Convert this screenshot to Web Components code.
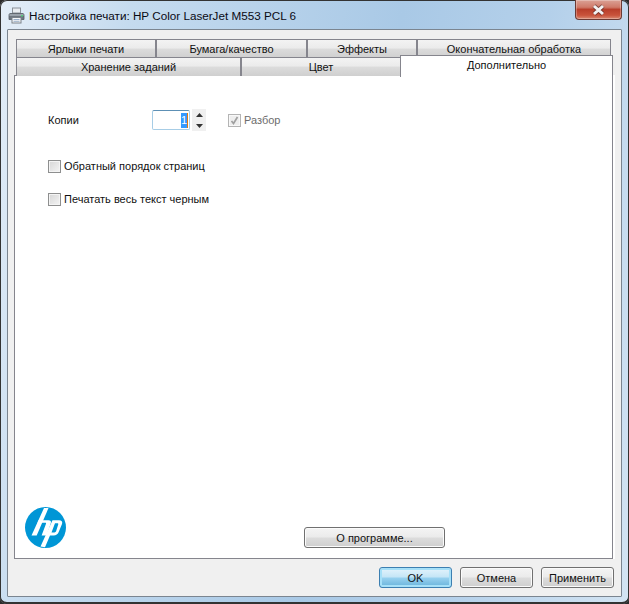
<!DOCTYPE html>
<html lang="ru">
<head>
<meta charset="utf-8">
<title>Настройка печати</title>
<style>
html, body { margin: 0; padding: 0; background: #2b2b2b; }
body { font: 11px "Liberation Sans", Arial, sans-serif; color: #111; }
</style>
</head>
<body>
<print-dialog>
  <title-bar slot="title">Настройка печати: HP Color LaserJet M553 PCL 6</title-bar>
  <tab-strip slot="tabs">
    <tab-row>
      <tab-item style="width:140px">Ярлыки печати</tab-item>
      <tab-item style="width:151px">Бумага/качество</tab-item>
      <tab-item style="width:110px">Эффекты</tab-item>
      <tab-item style="width:194px">Окончательная обработка</tab-item>
    </tab-row>
    <tab-row>
      <tab-item style="width:225px">Хранение заданий</tab-item>
      <tab-item style="width:160px">Цвет</tab-item>
      <tab-item active style="width:213px">Дополнительно</tab-item>
    </tab-row>
  </tab-strip>
  <advanced-page slot="page"></advanced-page>
  <win-button slot="actions" default style="width:73px">OK</win-button>
  <win-button slot="actions" style="width:73px">Отмена</win-button>
  <win-button slot="actions" style="width:73px">Применить</win-button>
</print-dialog>

<script>
const FONT = '"Liberation Sans", Arial, sans-serif';

class PrintDialog extends HTMLElement {
    constructor() {
        super();
        this.attachShadow({ mode: 'open' });
        this.shadowRoot.innerHTML = `
            <style>
                :host {
                    display: block;
                    box-sizing: border-box;
                    width: 629px;
                    height: 604px;
                    padding: 0 1px 2px 1px;
                    border-radius: 7px;
                    background: linear-gradient(100deg, #e4eef8 0%, #c5dbef 18%, #a9c9e6 55%, #b4d0ea 75%, #d3e4f3 100%);
                    box-shadow: inset 0 0 0 1px #333, inset 0 -2px 0 #333;
                    overflow: hidden;
                }
                .client {
                    box-sizing: border-box;
                    height: 568px;
                    margin: 0 6px 0 6px;
                    padding: 10px 8px 0 6px;
                    background: #f0f0f0;
                    border: 1px solid #7b8590;
                    border-radius: 1px;
                    display: flex;
                    flex-direction: column;
                }
                .actions {
                    display: flex;
                    justify-content: flex-end;
                    gap: 8px;
                    padding: 8px 0 0 0;
                    margin-right: -1px;
                }
            </style>
            <slot name="title"></slot>
            <div class="client">
                <slot name="tabs"></slot>
                <slot name="page"></slot>
                <div class="actions"><slot name="actions"></slot></div>
            </div>`;
    }
}
customElements.define('print-dialog', PrintDialog);

class TitleBar extends HTMLElement {
    constructor() {
        super();
        this.attachShadow({ mode: 'open' });
        this.shadowRoot.innerHTML = `
            <style>
                :host {
                    display: flex;
                    align-items: flex-start;
                    height: 29px;
                    font: 11.7px ${FONT};
                    color: #0a0a14;
                }
                .icon { margin: 7px 4px 0 7px; flex: none; }
                .text { margin-top: 8px; line-height: 15px; white-space: nowrap; flex: 1; }
                close-button { margin-right: 6px; }
            </style>
            <svg class="icon" width="17" height="17" viewBox="0 0 17 17">
                <rect x="4.5" y="1" width="8" height="5" fill="#e9edf1" stroke="#8b9299"/>
                <path d="M2 6.5h13a1.5 1.5 0 0 1 1 1.4v4.6H1V7.9a1.5 1.5 0 0 1 1-1.4z" fill="#6f7780" stroke="#565d65" stroke-width=".8"/>
                <rect x="1.5" y="7" width="14" height="2" fill="#9aa2aa"/>
                <rect x="13" y="8" width="2" height="1.4" fill="#4fd07a"/>
                <rect x="4" y="10.5" width="9" height="5.5" fill="#f4f6f8" stroke="#7a828a"/>
                <path d="M5.500 12.500h6M5.500 14.300h6" stroke="#8fa7c4" stroke-width=".9"/>
            </svg>
            <span class="text"><slot></slot></span>
            <close-button></close-button>`;
    }
}
customElements.define('title-bar', TitleBar);

class CloseButton extends HTMLElement {
    constructor() {
        super();
        this.attachShadow({ mode: 'open' });
        this.shadowRoot.innerHTML = `
            <style>
                :host {
                    display: flex;
                    align-items: center;
                    justify-content: center;
                    box-sizing: border-box;
                    width: 47px;
                    height: 20px;
                    border: 1px solid #6b3a34;
                    border-top: 0;
                    border-radius: 0 0 4px 4px;
                    background: linear-gradient(#dba195 0%, #cf7a69 38%, #b93f2b 50%, #c9533b 80%, #d98a72 100%);
                    box-shadow: inset 0 0 0 1px rgba(255,255,255,.28);
                }
            </style>
            <svg width="15" height="12" viewBox="0 0 15 12">
                <path d="M3 2 12 10M12 2 3 10" fill="none" stroke="#4d2a28" stroke-width="4.6" opacity=".6"/>
                <path d="M3 2 12 10M12 2 3 10" fill="none" stroke="#f2f2f2" stroke-width="3"/>
            </svg>`;
    }
}
customElements.define('close-button', CloseButton);

class TabStrip extends HTMLElement {
    constructor() {
        super();
        this.attachShadow({ mode: 'open' });
        this.shadowRoot.innerHTML = `
            <style>
                :host { display: block; padding-left: 2px; position: relative; z-index: 1; margin-bottom: -1px; }
            </style>
            <slot></slot>`;
    }
}
customElements.define('tab-strip', TabStrip);

class TabRow extends HTMLElement {
    constructor() {
        super();
        this.attachShadow({ mode: 'open' });
        this.shadowRoot.innerHTML = `
            <style>
                :host { display: flex; height: 18px; align-items: flex-end; }
            </style>
            <slot></slot>`;
    }
}
customElements.define('tab-row', TabRow);

class TabItem extends HTMLElement {
    constructor() {
        super();
        this.attachShadow({ mode: 'open' });
        this.shadowRoot.innerHTML = `
            <style>
                :host {
                    display: flex;
                    justify-content: center;
                    box-sizing: border-box;
                    height: 19px;
                    padding-top: 2px;
                    flex: none;
                    border: 1px solid #85858d;
                    border-bottom: 0;
                    background: linear-gradient(#f3f3f3 0%, #ebebeb 45%, #dcdcdc 50%, #cfcfcf 100%);
                    font: 11px/15px ${FONT};
                    color: #111;
                    white-space: nowrap;
                }
                :host([active]) {
                    position: relative;
                    height: 22px;
                    margin-left: -1px;
                    margin-bottom: -1px;
                    background: #fff;
                    padding-top: 2px;
                }
            </style>
            <slot></slot>`;
    }
}
customElements.define('tab-item', TabItem);

class AdvancedPage extends HTMLElement {
    constructor() {
        super();
        this.attachShadow({ mode: 'open' });
        this.shadowRoot.innerHTML = `
            <style>
                :host {
                    display: flex;
                    flex-direction: column;
                    box-sizing: border-box;
                    height: 484px;
                    padding: 33px 0 10px 33px;
                    background: #fff;
                    border: 1px solid #85858d;
                    box-shadow: 2px 0 0 #fff;
                    font: 11px/15px ${FONT};
                    color: #111;
                }
                .copies { display: flex; align-items: center; height: 22px; }
                .copies .label { width: 104px; }
                .copies check-box { margin-left: 22px; }
                .stack { display: flex; flex-direction: column; gap: 18px; margin-top: 28px; }
                .bottom { margin-top: auto; display: flex; align-items: flex-end; }
                .bottom win-button { width: 141px; margin: 0 0 0 238px; }
            </style>
            <div class="copies">
                <span class="label">Копии</span>
                <spin-box value="1"></spin-box>
                <check-box checked disabled>Разбор</check-box>
            </div>
            <div class="stack">
                <check-box>Обратный порядок страниц</check-box>
                <check-box>Печатать весь текст черным</check-box>
            </div>
            <div class="bottom">
                <hp-logo></hp-logo>
                <win-button>О программе...</win-button>
            </div>`;
    }
}
customElements.define('advanced-page', AdvancedPage);

class SpinBox extends HTMLElement {
    constructor() {
        super();
        this.attachShadow({ mode: 'open' });
        const value = this.getAttribute('value') || '';
        this.shadowRoot.innerHTML = `
            <style>
                :host { display: flex; align-items: center; gap: 2px; }
                .field {
                    box-sizing: border-box;
                    width: 38px;
                    height: 20px;
                    display: flex;
                    justify-content: flex-end;
                    align-items: center;
                    padding-right: 1px;
                    background: #fff;
                    border: 1px solid #a7cde6;
                    border-top-color: #5d90b5;
                    border-radius: 2px;
                }
                .sel { background: #3399ff; color: #fff; width: 6px; height: 15px; line-height: 15px; text-align: center; border-right: 1px solid #e07a10; }
                .arrows { display: flex; flex-direction: column; width: 14px; height: 22px; background: #f0f0f0; }
                .arrows span { flex: 1; display: flex; align-items: center; justify-content: center; }
                .arrows svg { display: block; }
            </style>
            <div class="field"><span class="sel">${value}</span></div>
            <div class="arrows">
                <span><svg width="7" height="4"><path d="M3.500 0 7 4H0z" fill="#333"/></svg></span>
                <span><svg width="7" height="4"><path d="M0 0h7L3.500 4z" fill="#333"/></svg></span>
            </div>`;
    }
}
customElements.define('spin-box', SpinBox);

class CheckBox extends HTMLElement {
    constructor() {
        super();
        this.attachShadow({ mode: 'open' });
        const checked = this.hasAttribute('checked');
        this.shadowRoot.innerHTML = `
            <style>
                :host { display: flex; align-items: center; gap: 3px; height: 15px; }
                :host([disabled]) { color: #6d6d6d; }
                .box {
                    box-sizing: border-box;
                    width: 13px;
                    height: 13px;
                    flex: none;
                    border: 1px solid #8e8f8f;
                    background: linear-gradient(135deg, #d6d6d6, #e8e8e8 60%, #f4f4f4);
                    box-shadow: inset 0 0 0 1px #f4f4f4;
                    display: flex;
                    align-items: center;
                    justify-content: center;
                }
                :host([disabled]) .box { border-color: #b4b4b4; background: #eeeeee; box-shadow: inset 0 0 0 1px #f8f8f8; }
            </style>
            <span class="box">${checked ? '<svg width="9" height="9" viewBox="0 0 9 9"><path d="M1.500 5 3.500 7.500 7.500 1" fill="none" stroke="#a0a0a0" stroke-width="1.7"/></svg>' : ''}</span>
            <span><slot></slot></span>`;
    }
}
customElements.define('check-box', CheckBox);

class WinButton extends HTMLElement {
    constructor() {
        super();
        this.attachShadow({ mode: 'open' });
        this.shadowRoot.innerHTML = `
            <style>
                :host {
                    display: flex;
                    align-items: center;
                    justify-content: center;
                    box-sizing: border-box;
                    height: 21px;
                    flex: none;
                    border: 1px solid #707070;
                    border-radius: 3px;
                    background: linear-gradient(#f4f4f4 0%, #ebebeb 48%, #dcdcdc 52%, #cfcfcf 100%);
                    box-shadow: inset 0 0 0 1px #fbfbfb;
                    font: 11px ${FONT};
                    color: #111;
                }
                :host([default]) {
                    border-color: #3c7fb1;
                    background: linear-gradient(#e5f4fc 0%, #c4e5f6 48%, #98d1ef 52%, #68b3db 100%);
                    box-shadow: inset 0 0 0 2px #a6e0f8;
                }
            </style>
            <slot></slot>`;
    }
}
customElements.define('win-button', WinButton);

class HpLogo extends HTMLElement {
    constructor() {
        super();
        this.attachShadow({ mode: 'open' });
        this.shadowRoot.innerHTML = `
            <style>
                :host { display: block; width: 41px; height: 41px; margin-left: -23px; flex: none; }
                svg { display: block; }
            </style>
            <svg width="41" height="41" viewBox="0 0 41 41">
                <circle cx="20.500" cy="20.500" r="20.500" fill="#0096d6"/>
                <path fill="#fff" d="M19 1H23.500L11.700 28.500H6.500Z"/>
                <path fill="#fff" d="M13.500 13.300H23.500C25.500 13.300 26.500 14.600 25.800 16.300L21.500 28.500H16.600L21 16.800C21.300 16.100 21 15.800 20.300 15.800H12.500Z"/>
                <path fill="#fff" fill-rule="evenodd" d="M27.500 13.300H34C36.600 13.300 37.800 14.800 37 17L33.700 25C32.900 27.200 31.100 28.500 28.700 28.500H25L20 40.200 15.500 39.500ZM30 16.200 26.500 25.400H29.500C30.300 25.400 30.800 25 31.100 24.300L33.200 17.600C33.500 16.700 33.100 16.200 32.200 16.200Z"/>
            </svg>`;
    }
}
customElements.define('hp-logo', HpLogo);
</script>
</body>
</html>
